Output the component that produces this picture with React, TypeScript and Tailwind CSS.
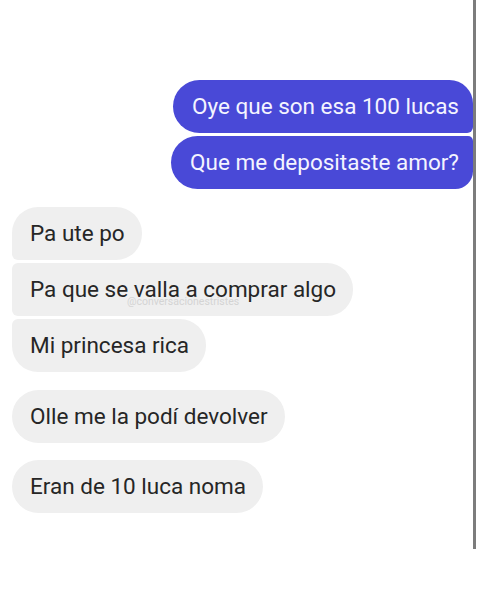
import React from "react";

const font = { fontFamily: "Roboto, 'Liberation Sans', sans-serif" };

export default function App() {
  return (
    <div className="w-[480px] h-[600px] bg-white flex flex-row items-start" style={font}>
      <div className="w-[473px] flex flex-col pt-[80px]">
        <div className="flex flex-col items-end gap-[3px]">
          <div className="h-[53px] flex items-center pl-[19px] pr-[14px] bg-[#4949d7] text-[#f4f4ff] text-[22.5px] rounded-tl-[27px] rounded-bl-[27px] rounded-tr-[24px] rounded-br-[6px]">
            Oye que son esa 100 lucas
          </div>
          <div className="h-[53px] flex items-center pl-[19px] pr-[14px] bg-[#4949d7] text-[#f4f4ff] text-[22.5px] rounded-tl-[27px] rounded-bl-[27px] rounded-tr-[5px] rounded-br-[18px]">
            Que me depositaste amor?
          </div>
        </div>
        <div className="flex flex-col items-start gap-[3px] mt-[18px] pl-[12px]">
          <div className="h-[53px] flex items-center pl-[18px] pr-[17px] bg-[#efefef] text-[#262626] text-[22.5px] rounded-tl-[26px] rounded-tr-[26px] rounded-br-[26px] rounded-bl-[6px]">
            Pa ute po
          </div>
          <div className="relative h-[53px] flex items-center pl-[18px] pr-[17px] bg-[#efefef] text-[#262626] text-[22.5px] rounded-tl-[6px] rounded-tr-[26px] rounded-br-[26px] rounded-bl-[6px]">
            Pa que se valla a comprar algo
            <span className="absolute left-[115px] top-[34px] text-[10.5px] text-[#d4d4d4] leading-none">
              @conversacionestristes
            </span>
          </div>
          <div className="h-[53px] flex items-center pl-[18px] pr-[17px] bg-[#efefef] text-[#262626] text-[22.5px] rounded-tl-[6px] rounded-tr-[26px] rounded-br-[26px] rounded-bl-[26px]">
            Mi princesa rica
          </div>
        </div>
        <div className="flex flex-col items-start gap-[17px] mt-[18px] pl-[12px]">
          <div className="h-[53px] flex items-center pl-[18px] pr-[17px] bg-[#efefef] text-[#262626] text-[22.5px] rounded-[27px]">
            Olle me la podí devolver
          </div>
          <div className="h-[53px] flex items-center pl-[18px] pr-[17px] bg-[#efefef] text-[#262626] text-[22.5px] rounded-[27px]">
            Eran de 10 luca noma
          </div>
        </div>
      </div>
      <div className="w-[3px] h-[549px] bg-[#7c7c7c]" />
    </div>
  );
}
